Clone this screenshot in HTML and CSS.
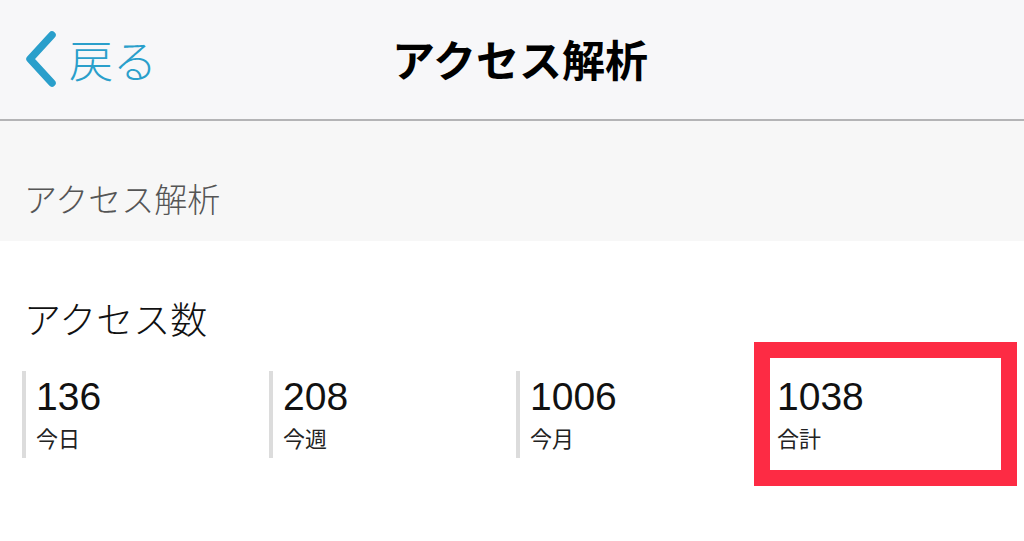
FILE: index.html
```html
<!DOCTYPE html>
<html lang="ja">
<head>
    <meta charset="UTF-8">
    <meta name="viewport" content="width=device-width, initial-scale=1.0">
    <title>アクセス解析</title>
    <link rel="stylesheet" href="styles.css">
</head>
<body>

<header class="navbar">
    <a class="back" href="#">
        <svg class="back-icon" width="40" height="64" viewBox="0 0 40 64">
            <path d="M30 8 L8 32 L30 56" fill="none" stroke="#2a9fcb" stroke-width="7.5" stroke-linecap="round" stroke-linejoin="round"/>
        </svg>
        <span class="back-label">戻る</span>
    </a>
    <h1 class="nav-title">アクセス解析</h1>
</header>

<div class="section-header">アクセス解析</div>

<main class="panel">
    <h2 class="panel-title">アクセス数</h2>
    <div class="stats">
        <div class="stat">
            <div class="stat-value">136</div>
            <div class="stat-label">今日</div>
        </div>
        <div class="stat">
            <div class="stat-value">208</div>
            <div class="stat-label">今週</div>
        </div>
        <div class="stat">
            <div class="stat-value">1006</div>
            <div class="stat-label">今月</div>
        </div>
        <div class="stat">
            <div class="stat-value">1038</div>
            <div class="stat-label">合計</div>
            <div class="highlight"></div>
        </div>
    </div>
</main>

</body>
</html>
```

FILE: styles.css
```css
body {
    margin: 0;
    padding: 0;
    background-color: #fff;
    color: #111;
    font-family: "Liberation Sans", "Noto Sans CJK JP", sans-serif;
}
.navbar {
    position: relative;
    height: 119px;
    background-color: #f7f7f9;
    border-bottom: 2px solid #b4b4b6;
    display: flex;
    align-items: center;
    justify-content: center;
}
.back {
    position: absolute;
    left: 22px;
    top: 27px;
    display: flex;
    align-items: center;
    text-decoration: none;
    color: #2a9fcb;
}
.back-icon {
    display: block;
}
.back-label {
    margin-left: 7px;
    font-family: "Noto Sans CJK JP", sans-serif;
    font-size: 44px;
    font-weight: 300;
    line-height: 64px;
}
.nav-title {
    margin: 0 0 4px 16px;
    font-family: "Noto Sans CJK JP", sans-serif;
    font-size: 43px;
    font-weight: 700;
    color: #000;
}
.section-header {
    height: 120px;
    box-sizing: border-box;
    padding: 52px 24px 0;
    background-color: #f7f7f7;
    color: #555;
    font-family: "Noto Sans CJK JP", sans-serif;
    font-size: 33px;
    font-weight: 300;
    line-height: 50px;
}
.panel {
    padding: 54px 0 80px 22px;
}
.panel-title {
    margin: 0 0 30px 2px;
    font-family: "Noto Sans CJK JP", sans-serif;
    font-size: 37px;
    font-weight: 300;
    line-height: 46px;
    color: #111;
}
.stats {
    display: flex;
}
.stat {
    position: relative;
    width: 247px;
    box-sizing: border-box;
    height: 87px;
    border-left: 4px solid #dcdcdc;
    padding: 4px 0 0 10px;
}
.stat-value {
    font-size: 39px;
    line-height: 44px;
    color: #111;
}
.stat-label {
    margin-top: 2px;
    font-family: "Noto Sans CJK JP", sans-serif;
    font-size: 22px;
    line-height: 32px;
    color: #222;
}
.highlight {
    position: absolute;
    left: -13px;
    top: -29px;
    width: 263px;
    height: 144px;
    box-sizing: border-box;
    border: 16px solid #fd2b44;
}
```
